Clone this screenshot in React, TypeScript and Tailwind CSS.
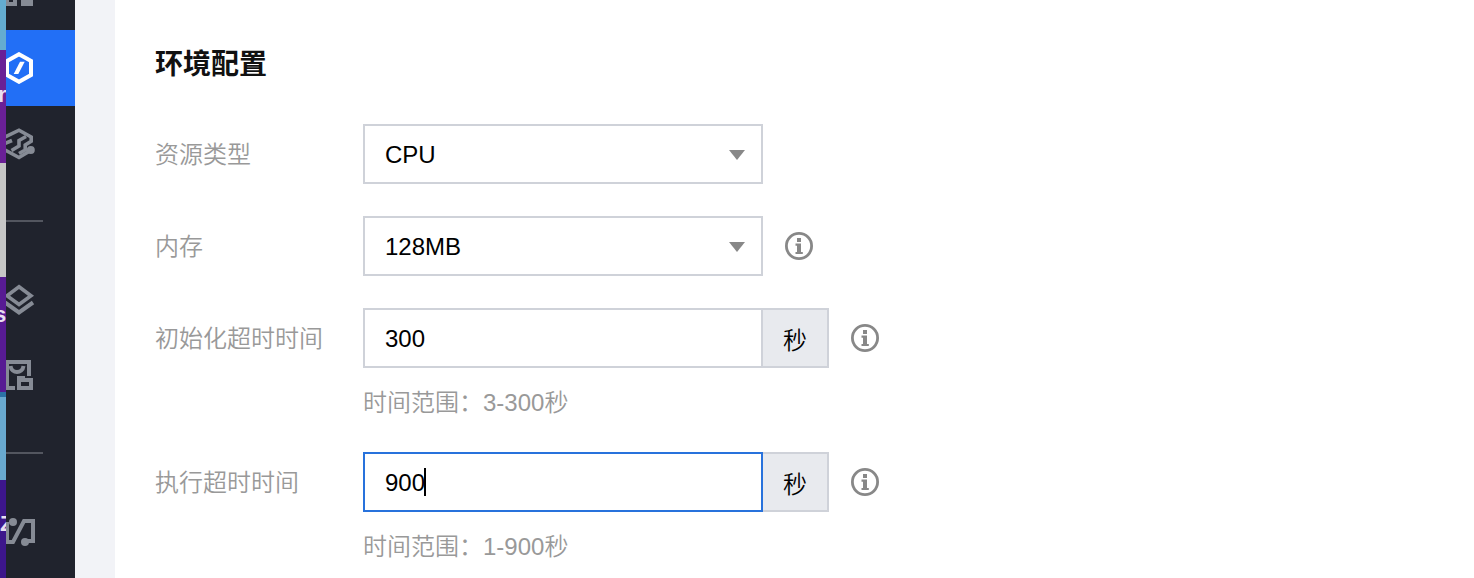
import type { ReactNode } from "react";

const labelClass =
  "flex h-[60px] w-52 shrink-0 items-center pt-0.5 text-2xl font-[350] text-[#999999]";

function NavItem({ active, children }: { active?: boolean; children: ReactNode }) {
  return (
    <div className={active ? "flex h-[76px] items-center bg-[#226ff6] text-white" : "flex h-[76px] items-center text-[#868b95]"}>
      <svg width="32" height="32" viewBox="0 0 32 32" fill="none" stroke="currentColor" strokeWidth="4">
        {children}
      </svg>
    </div>
  );
}

function InfoIcon() {
  return (
    <svg className="mt-4 ml-[22px] shrink-0" width="28" height="28" viewBox="0 0 28 28" fill="none">
      <circle cx="14" cy="14" r="12.6" stroke="#888888" strokeWidth="2.8" />
      <path d="M12 6h4v4h-4zM10.500 11.500H16V20h1.800v2h-7.300v-2H12v-6.300h-1.500z" fill="#888888" />
    </svg>
  );
}

function Select({ value }: { value: string }) {
  return (
    <div className="flex h-[60px] w-[400px] items-center justify-between border-2 border-[#cfd2d9] pt-0.5 pr-4 pl-5 text-2xl text-black">
      <span>{value}</span>
      <svg width="16" height="10" viewBox="0 0 16 10">
        <path d="M0 0h16L8 10z" fill="#888888" />
      </svg>
    </div>
  );
}

function TimeInput({ value, hint, focused }: { value: string; hint: string; focused?: boolean }) {
  return (
    <div>
      <div className="flex text-2xl text-black">
        <div className={focused ? "flex h-[60px] w-[400px] items-center border-2 border-[#2872dc] pl-5" : "flex h-[60px] w-[400px] items-center border-2 border-[#cfd2d9] pl-5"}>
          <span className="pt-0.5">{value}</span>
          {focused && <span className="-ml-px h-7 w-0.5 bg-black" />}
        </div>
        <div className="flex h-[60px] w-[66px] items-center justify-center border-2 border-l-0 border-[#cfd2d9] bg-[#e8eaee] pt-1.5 font-[350]">
          秒
        </div>
      </div>
      <p className="mt-[17px] text-2xl leading-9 font-[350] text-[#999999]">{hint}</p>
    </div>
  );
}

export default function App() {
  return (
    <div className="flex h-[578px] w-full overflow-hidden bg-white font-['Liberation_Sans','Noto_Sans_CJK_SC',sans-serif]">
      {/* desktop showing past the window edge */}
      <div className="flex w-1.5 shrink-0 flex-col overflow-hidden text-[22px] leading-7 font-bold text-[#e8dff0]">
        <div className="h-[50px] shrink-0 bg-[#64acd0]" />
        <div className="h-[113px] shrink-0 bg-[#6a2096] pt-[31px]">
          <span className="-ml-0.5">r</span>
        </div>
        <div className="h-[114px] shrink-0 bg-[#c6c6c6]" />
        <div className="h-[115px] shrink-0 bg-[#571b93] pt-6">
          <span className="-ml-1.5">s</span>
        </div>
        <div className="h-[88px] shrink-0 border-t-[5px] border-[#2b72a5] bg-[#69a9cf]" />
        <div className="h-[98px] shrink-0 bg-[#3d168b] pt-[30px]">
          <span>Z</span>
        </div>
      </div>

      <aside className="flex w-[69px] shrink-0 flex-col bg-[#20232d]">
        <div className="h-[30px] text-[#868b95]">
          <svg width="32" height="8" viewBox="0 0 32 8" fill="currentColor">
            <path d="M0 0h3v2h4V0h4v6H0zM15 0h12v6H15z" />
          </svg>
        </div>
        <NavItem active>
          <path d="M13 2.200l12 6.800V23l-12 6.800L1 23V9z" />
          <path d="M14 9.700h4.700L12.300 22H7.700z" fill="currentColor" stroke="none" />
        </NavItem>
        <NavItem>
          <path d="M-1 9L13 2.200 25.200 9v4.200l-6 3.800v5L13 25.500" strokeWidth="3.6" />
          <path d="M20 8.500l-7 4v5.500l-7.500 4.500M-1 15.500l7-3M-1 22l14 7.500 10-6" strokeWidth="3.6" />
          <circle cx="24.800" cy="22" r="4" fill="currentColor" stroke="none" />
        </NavItem>
        <div className="mt-[38px] mb-10 h-0.5 w-[37px] bg-[#53565f]" />
        <NavItem>
          <path d="M13 2.800L25 11.700 13 20.500 1 11.700z" strokeWidth="3.6" />
          <path d="M-1 18.500l14 10 14-10" />
        </NavItem>
        <NavItem>
          <path d="M0 2h23v14M1 2v26M0 28h9M4.500 6c1 8 12 8 13 0" />
          <path d="M13 20h12v8H13z" />
          <path d="M11 16h8v4h-8z" fill="currentColor" stroke="none" />
        </NavItem>
        <div className="mt-[38px] mb-10 h-0.5 w-[37px] bg-[#53565f]" />
        <NavItem>
          <path d="M1 6v20h6L18 5h9v20h-8" />
          <circle cx="7" cy="6" r="4" fill="currentColor" stroke="none" />
          <circle cx="19" cy="26" r="4" fill="currentColor" stroke="none" />
        </NavItem>
      </aside>

      <div className="w-10 shrink-0 bg-[#f2f3f7]" />

      <main className="flex-1 pt-[45px] pl-10">
        <h2 className="text-[28px] leading-10 font-bold text-[#111111]">环境配置</h2>
        <div className="mt-[39px] flex">
          <div className={labelClass}>资源类型</div>
          <Select value="CPU" />
        </div>
        <div className="mt-8 flex">
          <div className={labelClass}>内存</div>
          <Select value="128MB" />
          <InfoIcon />
        </div>
        <div className="mt-8 flex">
          <div className={labelClass}>初始化超时时间</div>
          <TimeInput value="300" hint="时间范围：3-300秒" />
          <InfoIcon />
        </div>
        <div className="mt-[31px] flex">
          <div className={labelClass}>执行超时时间</div>
          <TimeInput value="900" hint="时间范围：1-900秒" focused />
          <InfoIcon />
        </div>
      </main>
    </div>
  );
}
